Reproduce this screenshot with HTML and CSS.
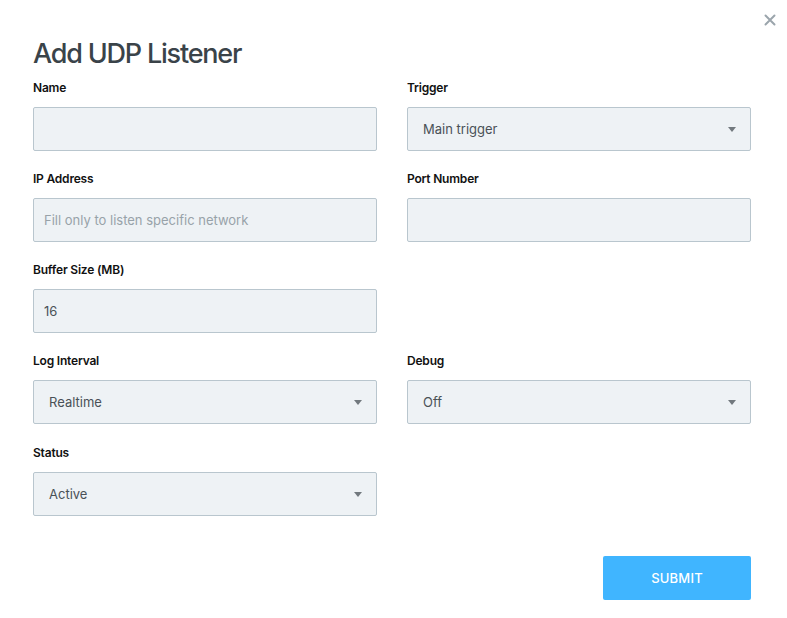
FILE: index.html
```html
<!DOCTYPE html>
<html lang="en">
<head>
<meta charset="utf-8">
<title>Add UDP Listener</title>
<link rel="stylesheet" href="styles.css">
</head>
<body>
<div class="modal">
  <button class="close" type="button" aria-label="Close">
    <svg width="12" height="12" viewBox="0 0 12 12"><path d="M1.5 1.5 L10.5 10.5 M10.5 1.5 L1.5 10.5" stroke="#9ba5ac" stroke-width="2" stroke-linecap="round"/></svg>
  </button>
  <h1 class="title">Add UDP Listener</h1>
  <form class="form">
    <div class="field">
      <label class="label">Name</label>
      <input class="input" type="text">
    </div>
    <div class="field">
      <label class="label">Trigger</label>
      <div class="select"><span class="select-value">Main trigger</span></div>
    </div>
    <div class="field">
      <label class="label">IP Address</label>
      <input class="input" type="text" placeholder="Fill only to listen specific network">
    </div>
    <div class="field">
      <label class="label">Port Number</label>
      <input class="input" type="text">
    </div>
    <div class="field">
      <label class="label">Buffer Size (MB)</label>
      <input class="input" type="text" value="16">
    </div>
    <div class="field empty"></div>
    <div class="field">
      <label class="label">Log Interval</label>
      <div class="select"><span class="select-value">Realtime</span></div>
    </div>
    <div class="field">
      <label class="label">Debug</label>
      <div class="select"><span class="select-value">Off</span></div>
    </div>
    <div class="field last">
      <label class="label">Status</label>
      <div class="select"><span class="select-value">Active</span></div>
    </div>
  </form>
  <div class="actions">
    <button class="submit" type="button">SUBMIT</button>
  </div>
</div>
</body>
</html>
```
FILE: styles.css
```css
* { box-sizing: border-box; }
html, body { margin: 0; padding: 0; background: #ffffff; }
body { font-family: Inter, "Noto Sans", sans-serif; color: #000; }

.modal {
  position: relative;
  width: 787px;
  height: 618px;
  padding: 37px 36px 0 33px;
}

.close {
  position: absolute;
  top: 14px;
  right: 11px;
  width: 12px;
  height: 12px;
  padding: 0;
  border: 0;
  background: none;
  display: flex;
}

.title {
  margin: 0 0 9px;
  font-size: 27px;
  line-height: 34px;
  font-weight: 500;
  color: #3a4349;
  letter-spacing: -1.2px;
}

.form {
  display: grid;
  grid-template-columns: 344px 344px;
  column-gap: 30px;
  row-gap: 20px;
}

.field { display: flex; flex-direction: column; gap: 11px; }
.field.last { margin-top: 1px; }

.label {
  font-size: 12px;
  line-height: 16px;
  font-weight: 600;
  color: #111;
  letter-spacing: -0.2px;
}

.input, .select {
  height: 44px;
  width: 100%;
  background: #eef2f5;
  border: 1px solid #b9c6ce;
  border-radius: 2px;
  font-family: inherit;
  font-size: 13px;
  color: #4a5157;
}

.input { padding: 0 10px; outline: none; }
.input::placeholder { color: #98a2a9; }

.select {
  position: relative;
  display: flex;
  align-items: center;
  padding: 0 15px;
}

.select::after {
  content: "";
  position: absolute;
  right: 14px;
  top: 19px;
  border-left: 4.5px solid transparent;
  border-right: 4.5px solid transparent;
  border-top: 5px solid #72797e;
}

.actions {
  display: flex;
  justify-content: flex-end;
  width: 718px;
  margin-top: 40px;
}

.submit {
  width: 148px;
  height: 44px;
  border: 0;
  border-radius: 2px;
  background: #40b5ff;
  color: #fff;
  font-family: inherit;
  font-size: 13px;
  font-weight: 500;
  letter-spacing: 0.2px;
}
```
